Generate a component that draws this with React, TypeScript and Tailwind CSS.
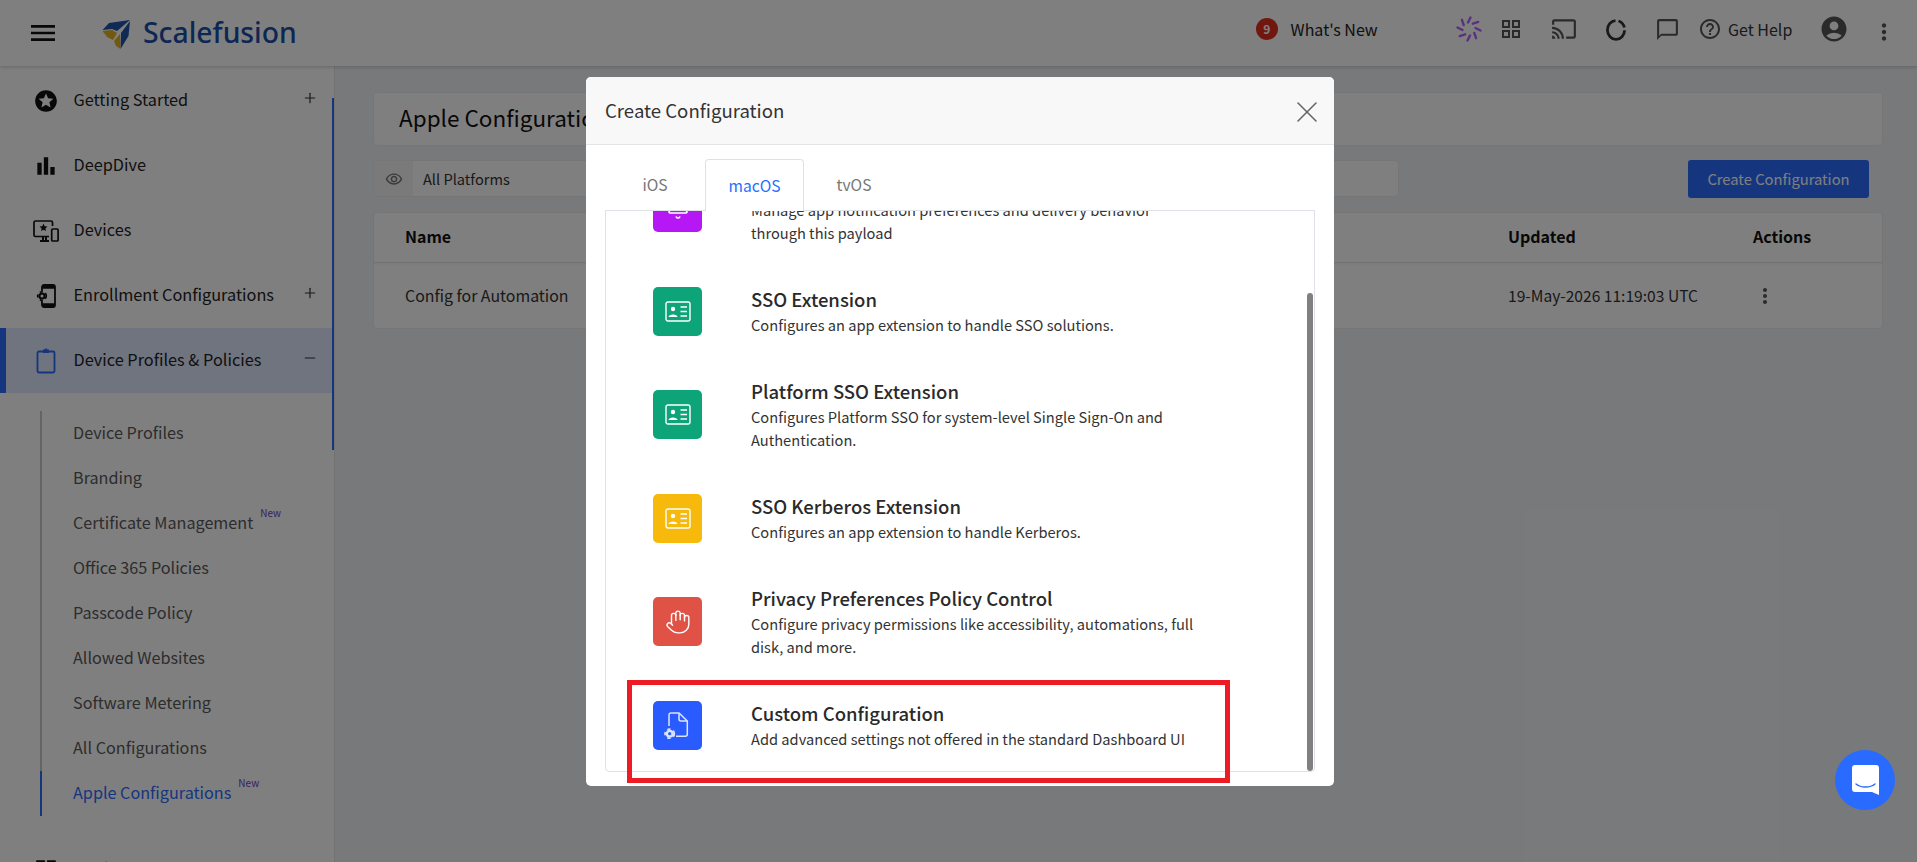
import { Bell, Hand, Plus, Minus, X } from 'lucide-react';
import {
  MdStars,
  MdBarChart,
  MdOutlineRemoveRedEye,
  MdOutlineGridView,
  MdOutlineCast,
  MdOutlineChatBubbleOutline,
  MdHelpOutline,
  MdAccountCircle,
  MdMoreVert,
  MdMenu,
} from 'react-icons/md';
import type { ReactNode } from 'react';

const FONT = "font-['Noto_Sans_CJK_KR','Noto_Sans',sans-serif]";

function Logo() {
  return (
    <svg viewBox="0 0 45 40" className="w-[45px] h-[40px] shrink-0">
      <path d="M7.5 17 L14 10 L35 7 L22 18 L17 16 Z" fill="#1e54aa" />
      <path d="M35 8 L33.5 23 L25.5 36 L26 20 Z" fill="#1e54aa" />
      <path d="M7.5 18 L17 17 L22 20 L18 27 L12 24 Z" fill="#e6b01f" />
      <path d="M19 28 L25 21 L25.5 36 L21 33 Z" fill="#e6b01f" />
    </svg>
  );
}

function Spinner() {
  const blades = [0, 45, 90, 135, 180, 225, 270, 315];
  return (
    <svg viewBox="0 0 26 26" className="w-[26px] h-[26px]">
      {blades.map((deg) => (
        <line
          key={deg}
          x1="14.5"
          y1="1.5"
          x2="12"
          y2="6.5"
          stroke="#b264ff"
          strokeWidth="2.4"
          strokeLinecap="round"
          transform={`rotate(${deg} 13 13)`}
        />
      ))}
    </svg>
  );
}

function DevicesIcon() {
  return (
    <svg viewBox="0 0 26 22" className="w-[26px] h-[22px]" fill="none" stroke="#111" strokeWidth="1.7">
      <path d="M19.5 6 V2.5 a1.5 1.5 0 0 0 -1.5 -1.5 H2.5 a1.5 1.5 0 0 0 -1.5 1.5 V15 a1.5 1.5 0 0 0 1.5 1.5 H16" />
      <path d="M7 21 H16 M10 16.5 V21 M13 16.5 V21" strokeWidth="2" />
      <rect x="18.7" y="9" width="6.4" height="12" rx="1" />
      <path d="M10.5 3.6 l1.2 2.6 2.8 .3 -2.1 1.9 .6 2.7 -2.5 -1.4 -2.5 1.4 .6 -2.7 -2.1 -1.9 2.8 -.3 Z" fill="#111" stroke="none" />
    </svg>
  );
}

function GearShape({ cx, cy, r, color, hole }: { cx: number; cy: number; r: number; color: string; hole: string }) {
  return (
    <g>
      <circle cx={cx} cy={cy} r={r * 0.72} fill={color} stroke="none" />
      <circle cx={cx} cy={cy} r={r * 0.85} fill="none" stroke={color} strokeWidth={r * 0.34} strokeDasharray={`${r * 0.6} ${r * 0.55}`} />
      <circle cx={cx} cy={cy} r={r * 0.3} fill={hole} stroke="none" />
    </g>
  );
}

function EnrollIcon() {
  return (
    <svg viewBox="0 0 20 24" className="w-[20px] h-[24px]" fill="none" stroke="#111" strokeWidth="1.8">
      <path d="M6 7 V3 a2 2 0 0 1 2 -2 H17 a2 2 0 0 1 2 2 V21 a2 2 0 0 1 -2 2 H8 a2 2 0 0 1 -2 -2 V17" />
      <path d="M6 3.4 H19 M6 20.6 H19" strokeWidth="2.6" />
      <GearShape cx={6} cy={12} r={5} color="#111" hole="#fff" />
    </svg>
  );
}

function ClipboardIcon() {
  return (
    <svg viewBox="0 0 20 26" className="w-[20px] h-[26px]" fill="none" stroke="#2b6cff" strokeWidth="1.8">
      <rect x="1.5" y="3.5" width="17" height="21" rx="1.5" />
      <path d="M7 1.5 H13 V5 H7 Z" fill="#2b6cff" stroke="none" />
      <circle cx="10" cy="1.8" r="1.4" fill="#2b6cff" stroke="none" />
    </svg>
  );
}

function LoaderRing() {
  return (
    <svg viewBox="0 0 24 24" className="w-[24px] h-[24px]" fill="none" stroke="#333" strokeWidth="2.8">
      <path d="M14.5 4 A8.6 9.4 0 0 1 20.4 10.5" />
      <path d="M20.6 13.2 A8.6 9.4 0 1 1 11.5 3.6" />
    </svg>
  );
}

function IdCardIcon() {
  return (
    <svg viewBox="0 0 26 21" className="w-[26px] h-[21px]" fill="none" stroke="#fff" strokeWidth="1.4">
      <rect x="1" y="1" width="24" height="19" rx="2" />
      <circle cx="8" cy="8" r="2.2" fill="#fff" stroke="none" />
      <path d="M3.5 16 C3.5 12.5 12.5 12.5 12.5 16 Z" fill="#fff" stroke="none" />
      <path d="M15.5 6 H22 M15.5 10.5 H22 M15.5 15 H22" />
    </svg>
  );
}

function CustomFileIcon() {
  return (
    <svg viewBox="0 0 28 28" className="w-[28px] h-[28px]" fill="none" stroke="#dbe5ff" strokeWidth="1.5">
      <path d="M5 15 V4 a2 2 0 0 1 2 -2 H15 L23.3 10 V23.3 a2 2 0 0 1 -2 2 H12" />
      <path d="M15 2 V8 a2 2 0 0 0 2 2 H23.3" />
      <GearShape cx={5.7} cy={22.7} r={5.4} color="#dbe5ff" hole="#2a5bff" />
    </svg>
  );
}

function NavRow({ icon, label, sign, active }: { icon: ReactNode; label: string; sign?: 'plus' | 'minus'; active?: boolean }) {
  return (
    <div className={`h-[65px] shrink-0 flex items-center pr-[16px] ${active ? 'bg-[#dee8ff] border-l-[6px] border-[#2b6cff] pl-[26px]' : 'pl-[32px]'}`}>
      <span className="w-[28px] flex justify-center">{icon}</span>
      <span className="ml-[13.5px] text-[16.3px] text-[#222] flex-1 -mt-[3px]">{label}</span>
      {sign === 'plus' && <Plus className="w-[16px] h-[16px] text-[#333] -mt-[6px]" strokeWidth={1.8} />}
      {sign === 'minus' && <Minus className="w-[16px] h-[16px] text-[#333] -mt-[6px]" strokeWidth={1.8} />}
    </div>
  );
}

function SubRow({ label, isNew, active }: { label: string; isNew?: boolean; active?: boolean }) {
  return (
    <div className={`h-[45px] flex items-center pl-[31px] border-l-[2px] ${active ? 'border-[#2b6cff]' : 'border-[#c8c8c8]'}`}>
      <span className={`text-[16.2px] -mt-[2px] ${active ? 'text-[#2b6cff]' : 'text-[#5a5a5a]'}`}>{label}</span>
      {isNew && <span className="ml-[7px] -mt-[22px] text-[10px] text-[#6a3fc8]">New</span>}
    </div>
  );
}

function ConfigItem({ icon, color, title, desc }: { icon: ReactNode; color: string; title: string; desc: string }) {
  return (
    <div className="flex items-center pl-[47px] py-[21.5px]">
      <div className={`w-[49px] h-[49px] rounded-[5px] flex items-center justify-center shrink-0 ${color}`}>{icon}</div>
      <div className="ml-[49px] w-[448px]">
        <div className="text-[18.5px] leading-[26px] font-medium text-[#2a2a2a] -mt-[1px] mb-[1px]">{title}</div>
        <div className="text-[14.65px] leading-[23px] text-[#333]">{desc}</div>
      </div>
    </div>
  );
}

export default function App() {
  return (
    <div className={`relative h-[862px] w-full overflow-hidden bg-[#f0f3f7] flex flex-col ${FONT}`}>
      {/* Top bar */}
      <header className="h-[66px] shrink-0 bg-white shadow-[0_1px_4px_rgba(0,0,0,0.2)] flex items-center pl-[27px] pr-[20px] z-10">
        <MdMenu className="w-[32px] h-[32px] text-[#111]" />
        <div className="ml-[36px] flex items-center gap-[3px]">
          <Logo />
          <span className="text-[28.3px] font-medium text-[#1a4ea8] leading-none font-['Noto_Sans',sans-serif] -mt-[2px]">Scalefusion</span>
        </div>
        <div className="ml-auto flex items-center h-full pb-[8px]">
          <span className="w-[22px] h-[22px] rounded-full bg-[#e0301e] text-white text-[12px] font-bold flex items-center justify-center">9</span>
          <span className="ml-[12.8px] w-[85px] text-[16px] text-[#222] whitespace-nowrap">What's New</span>
          <span className="ml-[80.4px]"><Spinner /></span>
          <MdOutlineGridView className="ml-[17px] w-[24px] h-[24px] text-[#555]" />
          <MdOutlineCast className="ml-[28px] w-[26px] h-[26px] text-[#555]" />
          <span className="ml-[27px]"><LoaderRing /></span>
          <MdOutlineChatBubbleOutline className="ml-[26.5px] w-[25px] h-[25px] text-[#555]" />
          <MdHelpOutline className="ml-[18.5px] w-[24px] h-[24px] text-[#555]" />
          <span className="ml-[6px] text-[16px] text-[#333] w-[64px] whitespace-nowrap">Get Help</span>
          <MdAccountCircle className="ml-[27px] w-[30px] h-[30px] text-[#555]" />
          <MdMoreVert className="ml-[22px] w-[26px] h-[26px] text-[#555] mt-[6px]" />
        </div>
      </header>

      <div className="flex flex-1 min-h-0">
        {/* Sidebar */}
        <aside className="relative w-[335px] shrink-0 bg-white border-r border-[#e4e4e4] pt-[2px] flex flex-col overflow-hidden">
          <NavRow icon={<MdStars className="w-[26px] h-[26px] text-[#111]" />} label="Getting Started" sign="plus" />
          <NavRow icon={<MdBarChart className="w-[26px] h-[26px] text-[#111]" />} label="DeepDive" />
          <NavRow icon={<DevicesIcon />} label="Devices" />
          <NavRow icon={<EnrollIcon />} label="Enrollment Configurations" sign="plus" />
          <NavRow icon={<ClipboardIcon />} label="Device Profiles & Policies" sign="minus" active />
          <div className="ml-[40px] mt-[18px] flex flex-col shrink-0">
            <SubRow label="Device Profiles" />
            <SubRow label="Branding" />
            <SubRow label="Certificate Management" isNew />
            <SubRow label="Office 365 Policies" />
            <SubRow label="Passcode Policy" />
            <SubRow label="Allowed Websites" />
            <SubRow label="Software Metering" />
            <SubRow label="All Configurations" />
            <SubRow label="Apple Configurations" isNew active />
          </div>
          <div className="mt-[21px] pl-[32px] h-[65px] shrink-0 flex items-center">
            <MdOutlineGridView className="w-[26px] h-[26px] text-[#111] ml-[1px]" />
            <span className="ml-[15px] text-[16.3px] text-[#222] -mt-[3px]">Application Mgmt</span>
          </div>
          {/* sidebar scroll thumb */}
          <div className="absolute right-0 top-[32px] w-[2px] h-[352px] bg-[#2b6cff]" />
        </aside>

        {/* Main */}
        <main className="flex-1 min-w-0 pl-[38px] pr-[34px] pt-[26px]">
          <div className="h-[54px] bg-white rounded-[4px] border border-[#ececec] flex items-center pl-[25px]">
            <h1 className="text-[22.5px] text-[#111] -mt-[3px]">Apple Configurations</h1>
          </div>
          <div className="mt-[14px] flex items-start">
            <div className="w-[1026px] h-[37px] bg-white rounded-[4px] border border-[#ececec] flex items-center">
              <div className="w-[39px] h-full bg-[#f4f4f4] flex items-center justify-center rounded-l-[4px]">
                <MdOutlineRemoveRedEye className="w-[18px] h-[18px] text-[#777]" />
              </div>
              <span className="ml-[10px] text-[14.6px] text-[#333]">All Platforms</span>
            </div>
            <button className="ml-[289px] w-[181px] h-[38px] rounded-[3px] bg-[#2b6cff] text-[14.75px] text-white">Create Configuration</button>
          </div>
          <div className="mt-[14px] bg-white rounded-[4px] border border-[#ececec]">
            <div className="h-[50px] flex items-center border-b border-[#e4e4e4] shadow-[0_1px_2px_rgba(0,0,0,0.05)] text-[16px] font-semibold text-[#111] pl-[31px]">
              <span className="w-[1103px] -mt-[4px]">Name</span>
              <span className="w-[245px] -mt-[4px]">Updated</span>
              <span className="-mt-[4px]">Actions</span>
            </div>
            <div className="h-[65px] flex items-center text-[#333] pl-[31px]">
              <span className="w-[1103px] text-[15.9px]">Config for Automation</span>
              <span className="w-[245px] text-[15.6px]">19-May-2026 11:19:03 UTC</span>
              <MdMoreVert className="w-[24px] h-[24px] text-[#555]" />
            </div>
          </div>
        </main>
      </div>

      {/* Backdrop */}
      <div className="absolute inset-0 bg-black/50 z-20" />

      {/* Create Configuration modal */}
      <div className="absolute left-[586px] top-[77px] w-[748px] h-[709px] bg-white rounded-[5px] z-30 flex flex-col">
        <div className="h-[68px] shrink-0 bg-[#f8f8f8] border-b border-[#e4e4e4] rounded-t-[5px] flex items-center pl-[19px] pr-[9px]">
          <span className="text-[18.6px] text-[#333] -mt-[1px]">Create Configuration</span>
          <X className="ml-auto w-[36px] h-[36px] text-[#666] mt-[2px]" strokeWidth={1.05} />
        </div>
        <div className="mx-[19px] h-[65px] shrink-0 flex items-end text-[15.6px] relative z-10">
          <div className="w-[100px] h-[51px] flex items-center justify-center text-[#777]">iOS</div>
          <div className="w-[99px] h-[52px] -mb-px flex items-center justify-center text-[#2470ff] bg-white border border-b-0 border-[#dee2e6] rounded-t-[4px]">macOS</div>
          <div className="w-[100px] h-[51px] flex items-center justify-center text-[#777]">tvOS</div>
        </div>
        <div className="relative mx-[19px] h-[562px] border border-[#dee2e6] rounded-b-[4px] overflow-hidden shrink-0">
          <div className="-mt-[61px]">
            <ConfigItem
              icon={<Bell className="w-[24px] h-[24px] text-white" strokeWidth={1.5} />}
              color="bg-[#b517f5]"
              title="Notifications"
              desc="Manage app notification preferences and delivery behavior through this payload"
            />
            <ConfigItem icon={<IdCardIcon />} color="bg-[#0ea47a]" title="SSO Extension" desc="Configures an app extension to handle SSO solutions." />
            <ConfigItem
              icon={<IdCardIcon />}
              color="bg-[#0ea47a]"
              title="Platform SSO Extension"
              desc="Configures Platform SSO for system-level Single Sign-On and Authentication."
            />
            <ConfigItem icon={<IdCardIcon />} color="bg-[#f7b90b]" title="SSO Kerberos Extension" desc="Configures an app extension to handle Kerberos." />
            <ConfigItem
              icon={<Hand className="w-[26px] h-[26px] text-white" strokeWidth={1.3} />}
              color="bg-[#e05245]"
              title="Privacy Preferences Policy Control"
              desc="Configure privacy permissions like accessibility, automations, full disk, and more."
            />
            <ConfigItem icon={<CustomFileIcon />} color="bg-[#2a5bff]" title="Custom Configuration" desc="Add advanced settings not offered in the standard Dashboard UI" />
          </div>
          <div className="absolute right-[1px] bottom-0 w-[6px] h-[478px] bg-[#808080] rounded-full" />
        </div>
        {/* Red highlight box */}
        <div className="absolute left-[41px] top-[603px] w-[603px] h-[103px] border-[5px] border-[#ed1c24]" />
      </div>

      {/* Chat launcher */}
      <div className="absolute left-[1835px] top-[750px] w-[60px] h-[60px] rounded-full bg-[#2a6bff] z-30 flex items-center justify-center">
        <svg viewBox="0 0 27 30" className="w-[27px] h-[30px]">
          <path d="M3 0 H24 a3 3 0 0 1 3 3 V30 L20 27 H3 a3 3 0 0 1 -3 -3 V3 a3 3 0 0 1 3 -3 Z" fill="#fff" />
          <path d="M4 19 C9 23 18 23 23 19" fill="none" stroke="#2a6bff" strokeWidth="1.4" strokeLinecap="round" />
        </svg>
      </div>
    </div>
  );
}
